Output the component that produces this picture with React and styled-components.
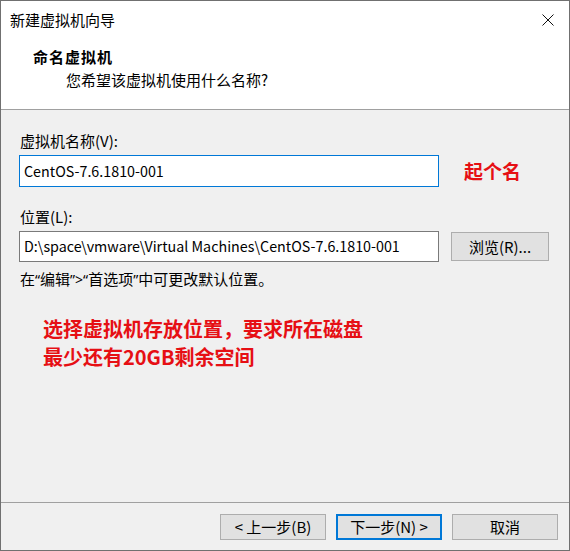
import styled, { createGlobalStyle } from "styled-components";

const GlobalStyle = createGlobalStyle`
  html, body {
    margin: 0;
    padding: 0;
    background: #ffffff;
  }
  * {
    box-sizing: border-box;
  }
`;

export default function App() {
  return (
    <>
      <GlobalStyle />
      <Window>
        <Top>
          <TitleBar>
            <span>新建虚拟机向导</span>
            <CloseBtn>
              <svg width="12" height="12" viewBox="0 0 12 12">
                <path d="M0.5 0.5 L11.5 11.5 M11.5 0.5 L0.5 11.5" stroke="#111" strokeWidth="1" fill="none" />
              </svg>
            </CloseBtn>
          </TitleBar>
          <Header>
            <h1>命名虚拟机</h1>
            <p>您希望该虚拟机使用什么名称?</p>
          </Header>
        </Top>

        <Body>
          <Label $top={21}>虚拟机名称(V):</Label>
          <Row>
            <TextBox $focused $height={32}>CentOS-7.6.1810-001</TextBox>
            <Note $inline>起个名</Note>
          </Row>

          <Label $top={20}>位置(L):</Label>
          <Row>
            <TextBox $height={31}>D:\space\vmware\Virtual Machines\CentOS-7.6.1810-001</TextBox>
            <Button $width={98} $height={29}>浏览(R)...</Button>
          </Row>
          <Hint>
            在<Quote>“</Quote>编辑<Quote>”&gt;“</Quote>首选项<Quote>”</Quote>中可更改默认位置。
          </Hint>

          <Note>
            选择虚拟机存放位置，要求所在磁盘
            <br />
            最少还有20GB剩余空间
          </Note>
        </Body>

        <Footer>
          <Button $width={106} $height={26}>&lt; 上一步(B)</Button>
          <Button $width={106} $height={26} $primary>下一步(N) &gt;</Button>
          <Button $width={106} $height={26}>取消</Button>
        </Footer>
      </Window>
    </>
  );
}

const Window = styled.div`
  width: 570px;
  height: 551px;
  border: 1px solid #707070;
  background: #f0f0f0;
  display: flex;
  flex-direction: column;
  font-family: "Noto Sans CJK SC", "Noto Sans", sans-serif;
  font-size: 15px;
  color: #000;
`;

const Top = styled.div`
  background: #ffffff;
  height: 109px;
  border-bottom: 1px solid #a0a0a0;
`;

const TitleBar = styled.div`
  height: 37px;
  display: flex;
  align-items: center;
  justify-content: space-between;
  padding: 0 15px 0 9px;
  line-height: 20px;
`;

const CloseBtn = styled.div`
  display: flex;
  align-items: center;
`;

const Header = styled.div`
  padding-left: 32px;

  h1 {
    margin: 9px 0 0;
    font-size: 15px;
    font-weight: 700;
    letter-spacing: 1px;
    line-height: 20px;
  }

  p {
    margin: 3px 0 0 33px;
    line-height: 20px;
  }
`;

const Body = styled.div`
  flex: 1;
  padding: 0 18px;
`;

const Label = styled.div`
  margin-top: ${(p) => p.$top}px;
  padding-left: 1px;
  line-height: 20px;
`;

const Row = styled.div`
  display: flex;
  align-items: center;
  margin-top: 4px;
`;

const TextBox = styled.div`
  width: 420px;
  height: ${(p) => p.$height}px;
  background: #ffffff;
  border: 1px solid ${(p) => (p.$focused ? "#0078d7" : "#7a7a7a")};
  padding: 0 0 2px 4px;
  display: flex;
  align-items: center;
  white-space: nowrap;
  overflow: hidden;
  font-size: 14.3px;
`;

const Button = styled.div`
  width: ${(p) => p.$width}px;
  height: ${(p) => p.$height}px;
  background: #e1e1e1;
  border: ${(p) => (p.$primary ? "2px solid #0078d7" : "1px solid #adadad")};
  display: flex;
  align-items: center;
  justify-content: center;
  line-height: 20px;
  margin-left: 12px;
`;

const Hint = styled.div`
  margin-top: 7px;
  padding-left: 1px;
  line-height: 20px;
`;

const Quote = styled.span`
  font-family: "Noto Sans", sans-serif;
  font-size: 14px;
`;

const Note = styled.div`
  color: #e60f14;
  font-weight: 700;
  font-size: ${(p) => (p.$inline ? 19 : 20)}px;
  line-height: ${(p) => (p.$inline ? 24 : 28)}px;
  margin: ${(p) => (p.$inline ? "0 0 0 25px" : "25px 0 0 24px")};
`;

const Footer = styled.div`
  height: 48px;
  border-top: 1px solid #a0a0a0;
  display: flex;
  justify-content: flex-end;
  align-items: flex-start;
  padding: 11px 11px 0 0;

  & > div:first-child {
    margin-left: 0;
  }
  & > div + div {
    margin-left: 10px;
  }
`;
